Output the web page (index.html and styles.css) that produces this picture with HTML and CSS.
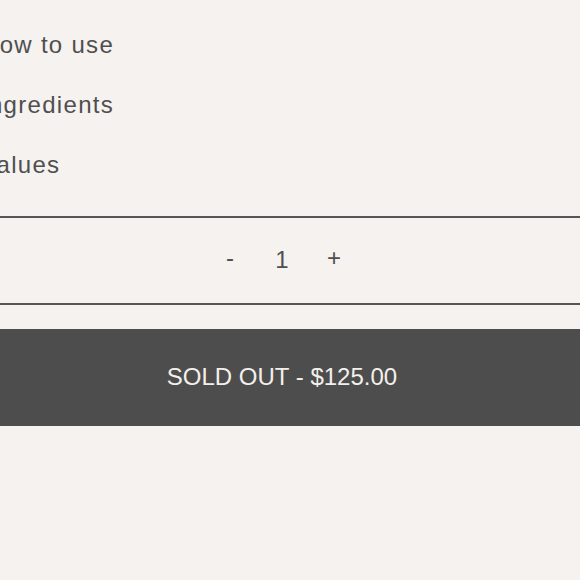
FILE: index.html
```html
<!DOCTYPE html>
<html lang="en">
<head>
<meta charset="utf-8">
<title>Product</title>
<link rel="stylesheet" href="styles.css">
</head>
<body>
<div class="product">
  <ul class="accordion">
    <li class="accordion-item">How to use</li>
    <li class="accordion-item">Ingredients</li>
    <li class="accordion-item">Values</li>
  </ul>
  <div class="quantity">
    <button class="qty-btn" type="button">-</button>
    <span class="qty-value">1</span>
    <button class="qty-btn" type="button">+</button>
  </div>
  <button class="buy" type="button">SOLD OUT - $125.00</button>
</div>
</body>
</html>
```
FILE: styles.css
```css
html, body {
  margin: 0;
  padding: 0;
  background: #f6f2ef;
}
body {
  font-family: "Liberation Sans", Arial, sans-serif;
  color: #4f4f4f;
  overflow: hidden;
}
.product {
  margin-left: -20px;
  width: 604px;
  padding-top: 15px;
}
.accordion {
  list-style: none;
  margin: 0 0 21px 0;
  padding: 0;
}
.accordion-item {
  font-size: 24px;
  line-height: 60px;
  height: 60px;
  letter-spacing: 1.3px;
  padding-left: 1px;
}
.quantity {
  border-top: 2px solid #555;
  border-bottom: 2px solid #555;
  height: 79px;
  padding-bottom: 6px;
  display: flex;
  justify-content: center;
  align-items: center;
  gap: 30px;
  font-size: 24px;
}
.qty-btn {
  background: none;
  border: 0;
  padding: 0;
  font: inherit;
  color: #4f4f4f;
  width: 22px;
  text-align: center;
}
.qty-value {
  width: 22px;
  text-align: center;
  position: relative;
  top: 2px;
}
.buy {
  display: block;
  width: 100%;
  height: 97px;
  margin-top: 24px;
  border: 0;
  background: #4d4d4d;
  color: #f3f0ec;
  font-family: "Liberation Sans", Arial, sans-serif;
  font-size: 24px;
  text-align: center;
  padding: 0 0 2px 0;
}
```
